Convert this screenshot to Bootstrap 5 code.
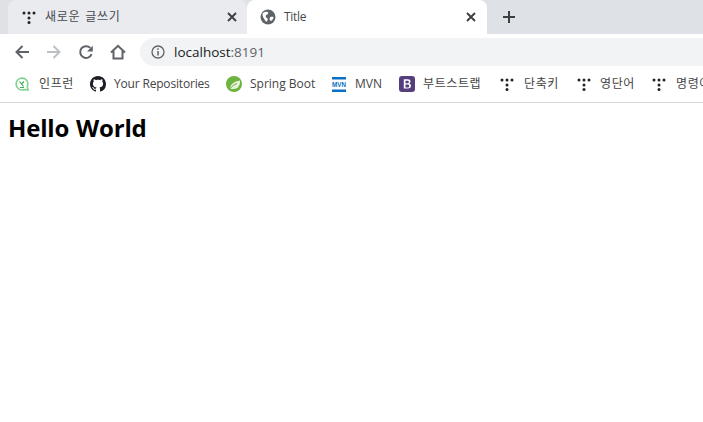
<!DOCTYPE html>
<html lang="ko">
<head>
<meta charset="utf-8">
<title>Title</title>
<link href="https://cdn.jsdelivr.net/npm/bootstrap@5.3.0/dist/css/bootstrap.min.css" rel="stylesheet">
<style>
html,body{height:100%;overflow:hidden;background:#fff}
body{font-family:"Open Sans","Noto Sans CJK KR",sans-serif;font-size:12px;color:#3c4043}
.tabstrip{height:34px;background:#dee1e6;padding-left:8px}
.tabitem{width:239px;height:34px;padding:0 7px 0 14px;background:#e9ebee;border-radius:8px 8px 0 0;gap:9px}
.tabitem.active-tab{width:240px;background:#fff;gap:8px;padding:0 8px 0 13px}
.tabtitle{flex:1 1 auto;color:#45494e;letter-spacing:.75px;word-spacing:1px}
.active-tab .tabtitle{letter-spacing:-.3px}
.newtab{width:44px}
.toolbar{height:32px;padding:4px 0 0 0;background:#fff}
.navicons{width:140px;padding-left:14px}
.navslot{width:32px;flex:none;line-height:0}
.addr{height:28px;flex:1;background:#f1f3f4;border-radius:14px 0 0 14px;padding-left:11px;gap:9px;font-size:13.5px;color:#202124}
.addr span span{color:#5f6368}
.marks{height:37px;padding-left:15px;border-bottom:1px solid #d6d7d9;white-space:nowrap;overflow:hidden}
.markitem{gap:9px;flex:none;color:#444}
.markitem svg{flex:none}
.ko{letter-spacing:.6px}
.en-narrow{letter-spacing:-.18px}
.gap-tight{gap:8px}
.gap-wide{gap:10px}
.w-inf{width:75px}.w-git{width:136px}.w-spr{width:106px}.w-mvn{width:67px}.w-bst{width:101px}.w-dan{width:77px}.w-eng{width:75px}
.mvntext{font-family:"Liberation Sans",sans-serif;font-size:6.500px;font-weight:700;fill:#0b6fc4}
.hello{font-size:24px;font-weight:700;color:#000;margin:0;padding:8px 0 0 8px;line-height:33px;letter-spacing:-.2px;word-spacing:1px}
</style>
</head>
<body>
<div class="tabstrip d-flex">
  <div class="tabitem d-flex align-items-center">
    <svg width="14" height="14" viewBox="0 0 14 14" fill="#222"><circle cx="2" cy="3" r="1.500"/><circle cx="7" cy="3" r="1.500"/><circle cx="12" cy="3" r="1.500"/><circle cx="7" cy="8" r="1.500"/><circle cx="7" cy="12.500" r="1.500"/></svg>
    <span class="tabtitle">새로운 글쓰기</span>
    <svg width="16" height="16" viewBox="0 0 16 16" stroke="#3c4043" stroke-width="1.900"><path d="M4 4l8 8M12 4l-8 8"/></svg>
  </div>
  <div class="tabitem active-tab d-flex align-items-center">
    <svg width="16" height="16" viewBox="0 0 16 16"><circle cx="8" cy="8" r="7.500" fill="#5f6368"/><path d="M2.500 4.500C4 3 6 2.500 7.500 3c1 .5 1 1.500 0 2.200-1 .6-1.800 1-1.800 2.200 0 1 1.500 1.300 2 2.300.3 1-.5 2.500-1.500 3 -1-.7-1.500-2-2.200-3.200-.7-1-1.500-2-1.500-5zM10.300 8c1.200-.5 2.500-.3 3.200 0 0 1.500-.8 3-2.200 3.800-1 .2-1.600-.8-1.600-1.800 0-.8 0-1.500.6-2z" fill="#fff"/></svg>
    <span class="tabtitle">Title</span>
    <svg width="16" height="16" viewBox="0 0 16 16" stroke="#3c4043" stroke-width="1.900"><path d="M4 4l8 8M12 4l-8 8"/></svg>
  </div>
  <div class="newtab d-flex align-items-center justify-content-center">
    <svg width="14" height="14" viewBox="0 0 14 14" stroke="#3c4043" stroke-width="2"><path d="M7 1v12M1 7h12"/></svg>
  </div>
</div>
<div class="toolbar d-flex">
  <div class="navicons d-flex align-items-center">
    <div class="navslot"><svg width="16" height="16" viewBox="0 0 16 16" fill="none" stroke="#5f6368" stroke-width="2"><path d="M15 8H2.500M8.500 2L2.500 8l6 6"/></svg></div>
    <div class="navslot"><svg width="16" height="16" viewBox="0 0 16 16" fill="none" stroke="#bdc1c6" stroke-width="2"><path d="M1 8h12.500M7.500 2l6 6-6 6"/></svg></div>
    <div class="navslot"><svg width="16" height="16" viewBox="0 0 16 16" fill="none" stroke="#5f6368" stroke-width="2"><path d="M13.600 10.200A5.900 5.900 0 1 1 12.300 3.900"/><path d="M14.800 1.800v5.700H9z" fill="#5f6368" stroke="none"/></svg></div>
    <div class="navslot"><svg width="16" height="16" viewBox="0 0 16 16" fill="none" stroke="#5f6368" stroke-width="2"><path d="M1 8.500L8 1.800l7 6.700M3.500 7v7.500h9V7"/></svg></div>
  </div>
  <div class="addr d-flex align-items-center">
    <svg width="14" height="14" viewBox="0 0 14 14" fill="none" stroke="#5f6368" stroke-width="1.300"><circle cx="7" cy="7" r="6"/><path d="M7 6v4.500M7 3.300v1.500" stroke-width="1.500"/></svg>
    <span>localhost<span>:8191</span></span>
  </div>
</div>
<div class="marks d-flex align-items-center">
  <div class="markitem w-inf d-flex align-items-center gap-wide">
    <svg width="14" height="14" viewBox="0 0 14 14" fill="none" stroke="#7fd28d" stroke-width="1.500"><path d="M7 1a6 6 0 1 0 2.500 11.500L13 13l-.8-3.300A6 6 0 0 0 7 1z"/><path d="M4.500 4.500l4 5M9 4.500L6.500 7M5 10.500h4" stroke="#3fae57" stroke-width="1.200"/></svg>
    <span class="ko">인프런</span>
  </div>
  <div class="markitem w-git d-flex align-items-center gap-tight">
    <svg width="16" height="16" viewBox="0 0 16 16" fill="#1b1f23"><path d="M8 0C3.580 0 0 3.580 0 8c0 3.540 2.290 6.530 5.470 7.590.4.070.55-.17.55-.38 0-.19-.01-.82-.01-1.490-2.010.37-2.530-.49-2.690-.94-.09-.23-.48-.94-.82-1.130-.28-.15-.68-.52-.01-.53.63-.01 1.080.58 1.230.82.720 1.210 1.870.87 2.330.66.070-.52.280-.87.510-1.070-1.780-.2-3.640-.89-3.640-3.950 0-.87.310-1.590.820-2.150-.08-.2-.36-1.020.080-2.120 0 0 .67-.21 2.200.82.640-.18 1.320-.27 2-.27s1.360.09 2 .27c1.530-1.040 2.200-.82 2.200-.82.440 1.100.16 1.920.08 2.120.51.560.82 1.270.82 2.150 0 3.070-1.870 3.750-3.650 3.950.29.250.54.730.54 1.480 0 1.070-.01 1.930-.01 2.200 0 .21.150.46.550.38A8.010 8.010 0 0 0 16 8c0-4.420-3.580-8-8-8z"/></svg>
    <span class="en-narrow">Your Repositories</span>
  </div>
  <div class="markitem w-spr d-flex align-items-center gap-tight">
    <svg width="16" height="16" viewBox="0 0 16 16"><circle cx="8" cy="8" r="8" fill="#6db33f"/><path d="M4 12.500C4.500 8 8 5.500 14 4.500c.5 4-1.500 8-6 8.500-1.500.1-3-.1-4-.5z" fill="#e4f2d9"/><path d="M4.500 12.500c1.500-2.500 4-4.200 6.500-5" stroke="#6db33f" fill="none"/></svg>
    <span>Spring Boot</span>
  </div>
  <div class="markitem w-mvn d-flex align-items-center">
    <svg width="14" height="15" viewBox="0 0 14 15"><path d="M0 0h14v2.500H0zM0 12.500h14V15H0z" fill="#0b6fc4"/><text class="mvntext" x="0" y="10" textLength="14" lengthAdjust="spacingAndGlyphs">MVN</text></svg>
    <span>MVN</span>
  </div>
  <div class="markitem w-bst d-flex align-items-center gap-tight">
    <svg width="16" height="16" viewBox="0 0 16 16"><rect width="16" height="16" rx="3" fill="#563d7c"/><path fill-rule="evenodd" d="M4.800 3.300h4c1.700 0 2.700.9 2.700 2.200 0 1-.6 1.800-1.500 2 1.200.2 2 1 2 2.300 0 1.700-1.200 2.800-3.100 2.800H4.800zM6.500 4.700v2.500h1.800c1 0 1.500-.5 1.500-1.300s-.5-1.200-1.400-1.200zm0 3.800v3h2c1.100 0 1.700-.5 1.700-1.500s-.6-1.500-1.800-1.500z" fill="#fff"/></svg>
    <span class="ko">부트스트랩</span>
  </div>
  <div class="markitem w-dan d-flex align-items-center gap-wide">
    <svg width="14" height="14" viewBox="0 0 14 14" fill="#222"><circle cx="2" cy="3" r="1.500"/><circle cx="7" cy="3" r="1.500"/><circle cx="12" cy="3" r="1.500"/><circle cx="7" cy="8" r="1.500"/><circle cx="7" cy="12.500" r="1.500"/></svg>
    <span class="ko">단축키</span>
  </div>
  <div class="markitem w-eng d-flex align-items-center">
    <svg width="14" height="14" viewBox="0 0 14 14" fill="#222"><circle cx="2" cy="3" r="1.500"/><circle cx="7" cy="3" r="1.500"/><circle cx="12" cy="3" r="1.500"/><circle cx="7" cy="8" r="1.500"/><circle cx="7" cy="12.500" r="1.500"/></svg>
    <span class="ko">영단어</span>
  </div>
  <div class="markitem d-flex align-items-center gap-wide">
    <svg width="14" height="14" viewBox="0 0 14 14" fill="#222"><circle cx="2" cy="3" r="1.500"/><circle cx="7" cy="3" r="1.500"/><circle cx="12" cy="3" r="1.500"/><circle cx="7" cy="8" r="1.500"/><circle cx="7" cy="12.500" r="1.500"/></svg>
    <span class="ko">명령어</span>
  </div>
</div>
<h1 class="hello">Hello World</h1>
<script src="https://cdn.jsdelivr.net/npm/bootstrap@5.3.0/dist/js/bootstrap.bundle.min.js"></script>
</body>
</html>
